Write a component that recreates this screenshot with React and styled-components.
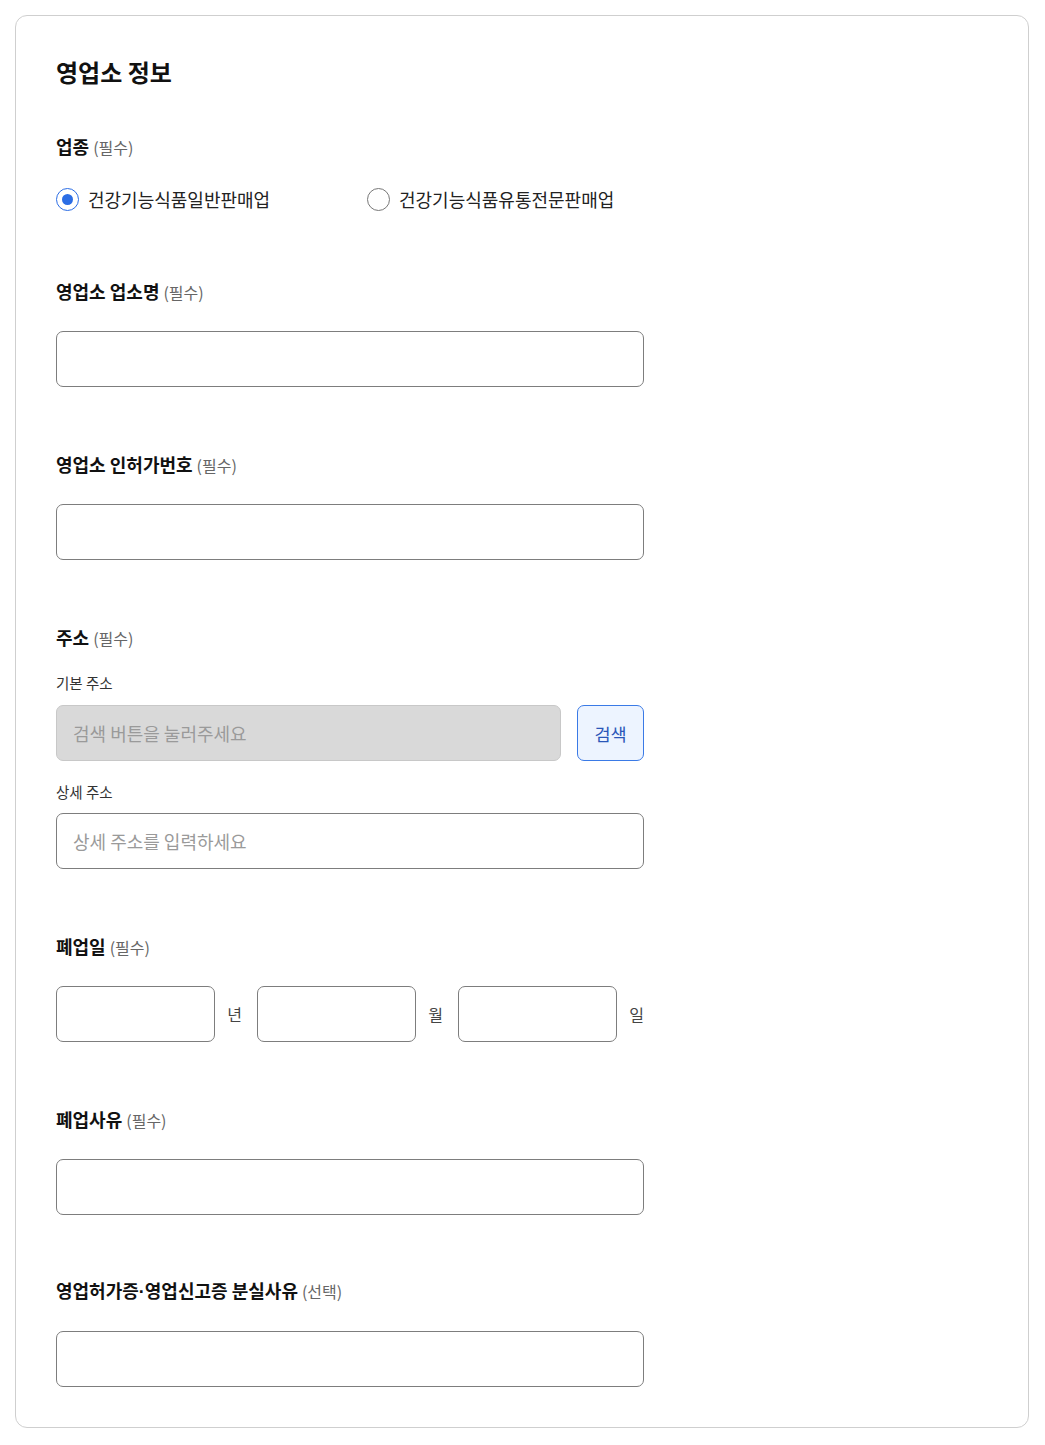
import React from "react";
import styled, { createGlobalStyle } from "styled-components";

const Global = createGlobalStyle`
  html, body { margin: 0; padding: 0; background: #fff; }
  body { font-family: "Noto Sans CJK KR", "Noto Sans", sans-serif; color: #111; }
  * { box-sizing: border-box; }
`;

const Page = styled.div`
  padding: 15px 16px 17px 15px;
`;

const Card = styled.section`
  border: 1px solid #cfcfcf;
  border-radius: 12px;
  padding: 40px 40px 40px 40px;
  background: #fff;
`;

const Title = styled.h2`
  margin: 0 0 46px;
  font-size: 24px;
  line-height: 32px;
  font-weight: 700;
  color: #111;
`;

const Field = styled.div`
  width: 588px;
  margin-bottom: ${(p) => p.$mb ?? 65}px;
`;

const Label = styled.div`
  font-size: 18px;
  line-height: 24px;
  font-weight: 700;
  color: #111;
  margin-bottom: ${(p) => p.$mb ?? 27}px;
`;

const Hint = styled.span`
  font-size: 16px;
  font-weight: 400;
  color: #666;
  margin-left: 4px;
`;

const Dot = styled.span`
  font-family: "Liberation Sans", sans-serif;
  font-weight: 700;
`;

const RadioRow = styled.div`
  display: flex;
  align-items: center;
  height: 24px;
`;

const RadioLabel = styled.label`
  flex: 0 0 311px;
  display: flex;
  align-items: center;
  gap: 9px;
  font-size: 18px;
  color: #222;
  cursor: pointer;
`;

const RadioInput = styled.input`
  appearance: none;
  margin: 0;
  flex: 0 0 23px;
  width: 23px;
  height: 23px;
  border-radius: 50%;
  border: 1.5px solid ${(p) => (p.checked ? "#2b6de5" : "#777")};
  display: grid;
  place-items: center;
  background: #fff;
  &::after {
    content: "";
    width: 11px;
    height: 11px;
    border-radius: 50%;
    background: ${(p) => (p.checked ? "#2b6de5" : "transparent")};
  }
`;

const TextInput = styled.input`
  display: block;
  width: 100%;
  min-width: 0;
  height: 56px;
  border: 1px solid ${(p) => (p.$disabled ? "#c8c8c8" : "#7d7d7d")};
  border-radius: 7px;
  background: ${(p) => (p.$disabled ? "#d9d9d9" : "#fff")};
  padding: 0 16px;
  font-family: inherit;
  font-size: 18px;
  color: #222;
  outline: none;
  &::placeholder { color: #9a9a9a; }
`;

const SubLabel = styled.div`
  font-size: 14.5px;
  line-height: 20px;
  color: #333;
  margin-bottom: ${(p) => p.$mb ?? 12}px;
`;

const SearchRow = styled.div`
  display: flex;
  gap: 16px;
  margin-bottom: 21px;
`;

const SearchButton = styled.button`
  flex: 0 0 67px;
  height: 56px;
  border: 1px solid #3a7ae6;
  border-radius: 7px;
  background: #edf4ff;
  color: #2a56b8;
  font-family: inherit;
  font-size: 17.5px;
  padding: 0;
  cursor: pointer;
`;

const DateRow = styled.div`
  display: flex;
  gap: 15px;
  margin-top: 1px;
`;

const DatePart = styled.div`
  flex: 1;
  display: flex;
  align-items: center;
  gap: 12px;
`;

const Unit = styled.span`
  flex: 0 0 15px;
  font-size: 16px;
  color: #444;
  text-align: center;
`;

export default function App() {
  const [type, setType] = React.useState("general");
  return (
    <Page>
      <Global />
      <Card>
        <Title>영업소 정보</Title>

        <Field $mb={68}>
          <Label $mb={28}>
            업종<Hint>(필수)</Hint>
          </Label>
          <RadioRow>
            <RadioLabel>
              <RadioInput
                type="radio"
                name="type"
                checked={type === "general"}
                onChange={() => setType("general")}
              />
              건강기능식품일반판매업
            </RadioLabel>
            <RadioLabel>
              <RadioInput
                type="radio"
                name="type"
                checked={type === "dist"}
                onChange={() => setType("dist")}
              />
              건강기능식품유통전문판매업
            </RadioLabel>
          </RadioRow>
        </Field>

        <Field>
          <Label>
            영업소 업소명<Hint>(필수)</Hint>
          </Label>
          <TextInput />
        </Field>

        <Field>
          <Label>
            영업소 인허가번호<Hint>(필수)</Hint>
          </Label>
          <TextInput />
        </Field>

        <Field>
          <Label $mb={23}>
            주소<Hint>(필수)</Hint>
          </Label>
          <SubLabel>기본 주소</SubLabel>
          <SearchRow>
            <TextInput $disabled readOnly placeholder="검색 버튼을 눌러주세요" />
            <SearchButton type="button">검색</SearchButton>
          </SearchRow>
          <SubLabel $mb={11}>상세 주소</SubLabel>
          <TextInput placeholder="상세 주소를 입력하세요" />
        </Field>

        <Field>
          <Label>
            폐업일<Hint>(필수)</Hint>
          </Label>
          <DateRow>
            <DatePart>
              <TextInput />
              <Unit>년</Unit>
            </DatePart>
            <DatePart>
              <TextInput />
              <Unit>월</Unit>
            </DatePart>
            <DatePart>
              <TextInput />
              <Unit>일</Unit>
            </DatePart>
          </DateRow>
        </Field>

        <Field $mb={63}>
          <Label>
            폐업사유<Hint>(필수)</Hint>
          </Label>
          <TextInput />
        </Field>

        <Field $mb={0}>
          <Label>
            영업허가증<Dot>·</Dot>영업신고증 분실사유<Hint>(선택)</Hint>
          </Label>
          <TextInput />
        </Field>
      </Card>
    </Page>
  );
}
